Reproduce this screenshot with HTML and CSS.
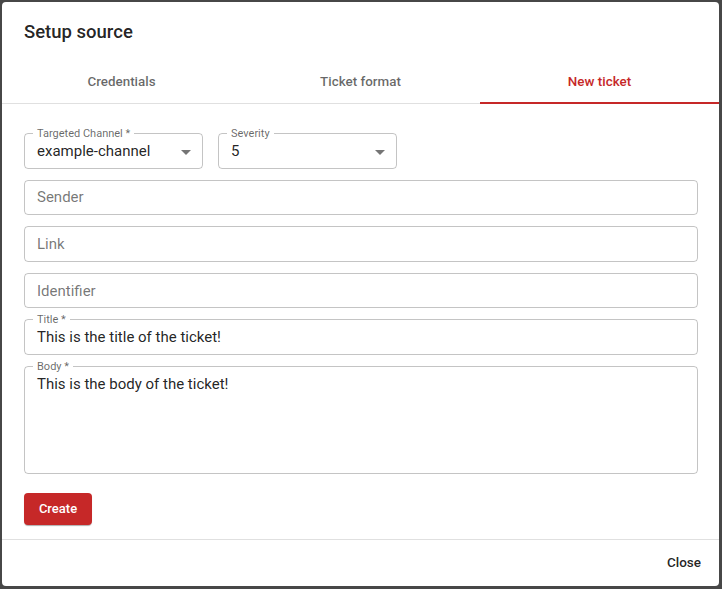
FILE: index.html
```html
<!DOCTYPE html>
<html>
<head>
<meta charset="utf-8">
<link rel="stylesheet" href="styles.css">
</head>
<body>
<div class="dialog">
  <div class="dialog-title">Setup source</div>
  <div class="tabs">
    <div class="tab">Credentials</div>
    <div class="tab">Ticket format</div>
    <div class="tab active">New ticket</div>
  </div>
  <div class="content">
    <div class="row">
      <div class="field select">
        <span class="label">Targeted Channel *</span>
        <span class="value">example-channel</span>
        <span class="arrow"></span>
      </div>
      <div class="field select">
        <span class="label">Severity</span>
        <span class="value">5</span>
        <span class="arrow"></span>
      </div>
    </div>
    <div class="field"><span class="placeholder">Sender</span></div>
    <div class="field"><span class="placeholder">Link</span></div>
    <div class="field"><span class="placeholder">Identifier</span></div>
    <div class="field">
      <span class="label">Title *</span>
      <span class="value">This is the title of the ticket!</span>
    </div>
    <div class="field multiline">
      <span class="label">Body *</span>
      <span class="value">This is the body of the ticket!</span>
    </div>
    <div class="actions-left">
      <button class="btn-create">Create</button>
    </div>
  </div>
  <div class="footer">
    <button class="btn-close">Close</button>
  </div>
</div>
</body>
</html>
```
FILE: styles.css
```css
html, body {
  margin: 0;
  padding: 0;
  height: 100%;
}
body {
  background: #474747;
  font-family: Roboto, "Liberation Sans", sans-serif;
  color: rgba(0, 0, 0, 0.87);
}
.dialog {
  margin: 2px 3px 3px 2px;
  height: 584px;
  background: #fff;
  border-radius: 4px;
  display: flex;
  flex-direction: column;
  overflow: hidden;
}
.dialog-title {
  padding: 20px 22px 14px;
  font-size: 18.5px;
  line-height: 20px;
  font-weight: 500;
  color: rgba(0, 0, 0, 0.87);
}
.tabs {
  display: flex;
  height: 48px;
  border-bottom: 1px solid #e0e0e0;
  box-sizing: border-box;
}
.tab {
  flex: 1;
  display: flex;
  align-items: center;
  justify-content: center;
  font-size: 13.4px;
  font-weight: 500;
  color: rgba(0, 0, 0, 0.6);
  padding-top: 5px;
  box-sizing: border-box;
  border-bottom: 2px solid transparent;
  margin-bottom: -1px;
}
.tab.active {
  color: #c62828;
  border-bottom-color: #c62828;
}
.content {
  flex: 1;
  padding: 29px 21px 0 22px;
  display: flex;
  flex-direction: column;
  gap: 11px;
}
.row {
  display: flex;
  gap: 15px;
}
.field {
  position: relative;
  height: 35.6px;
  box-sizing: border-box;
  border: 1px solid rgba(0, 0, 0, 0.23);
  border-radius: 4px;
  display: flex;
  align-items: center;
  padding: 0 12px;
  font-size: 15px;
}
.select {
  width: 179px;
}
.label {
  position: absolute;
  left: 8px;
  top: -6px;
  padding: 0 4px;
  background: #fff;
  font-size: 11px;
  line-height: 12px;
  color: rgba(0, 0, 0, 0.6);
}
.value {
  color: rgba(0, 0, 0, 0.87);
}
.placeholder {
  color: rgba(0, 0, 0, 0.55);
}
.arrow {
  position: absolute;
  right: 11px;
  top: 16px;
  width: 0;
  height: 0;
  border-left: 5px solid transparent;
  border-right: 5px solid transparent;
  border-top: 5px solid rgba(0, 0, 0, 0.54);
}
.multiline {
  height: 108px;
  align-items: flex-start;
  padding-top: 8px;
}
.actions-left {
  padding-top: 8px;
  display: flex;
}
.btn-create {
  width: 68px;
  height: 32px;
  border: none;
  border-radius: 4px;
  background: #c62828;
  color: #fff;
  font-family: Roboto, "Liberation Sans", sans-serif;
  font-size: 13px;
  font-weight: 500;
  box-shadow: 0 2px 1px -1px rgba(0,0,0,0.2), 0 1px 1px 0 rgba(0,0,0,0.14);
}
.footer {
  height: 47px;
  box-sizing: border-box;
  border-top: 1px solid #e0e0e0;
  display: flex;
  align-items: center;
  justify-content: flex-end;
  padding: 0 18px 3px 0;
}
.btn-close {
  background: none;
  border: none;
  padding: 0;
  font-family: Roboto, "Liberation Sans", sans-serif;
  font-size: 13.5px;
  font-weight: 500;
  color: rgba(0, 0, 0, 0.87);
}
```
